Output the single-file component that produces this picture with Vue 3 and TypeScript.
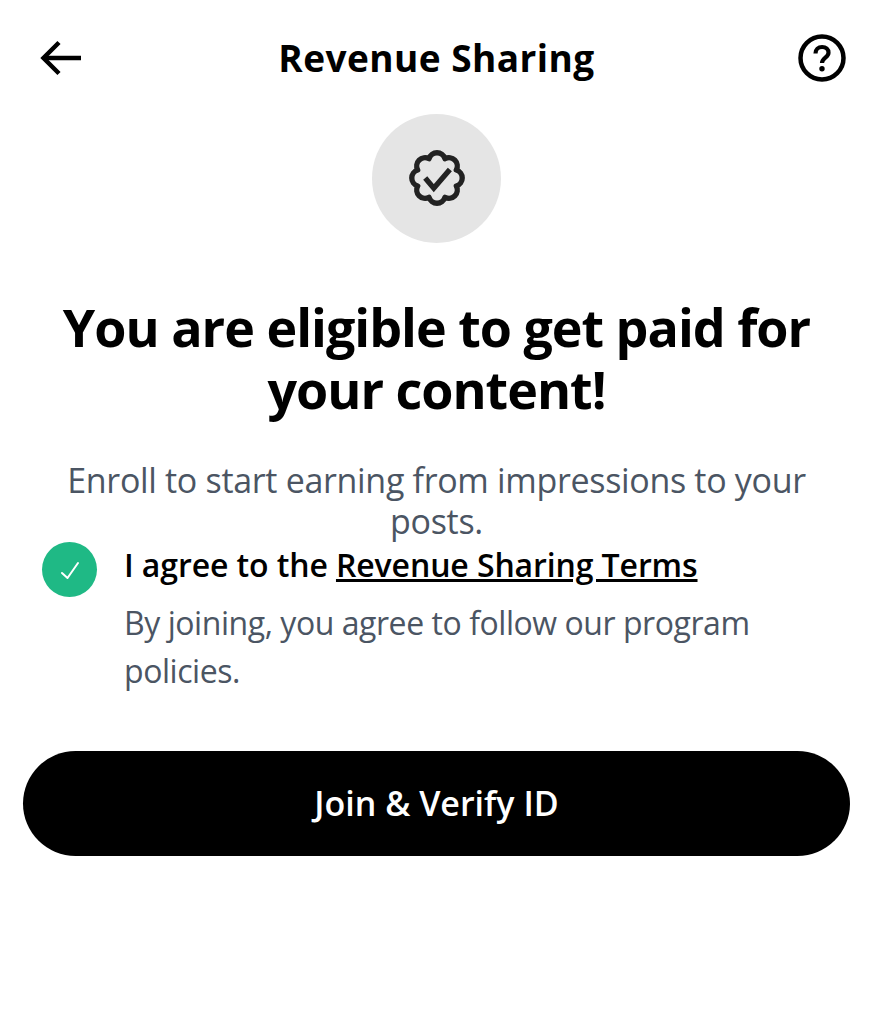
<template>
  <div class="page">
    <header class="topbar">
      <button class="icon-btn back" aria-label="Back">
        <svg width="44" height="44" viewBox="0 0 44 44" fill="none" stroke="#000" stroke-width="4.500">
          <path d="M5 22H42" />
          <path d="M20 6.500L4.500 22 20 37.500" />
        </svg>
      </button>
      <h2 class="title">Revenue Sharing</h2>
      <button class="icon-btn help" aria-label="Help">
        <svg width="48" height="48" viewBox="0 0 48 48" fill="none" stroke="#000" stroke-width="4.500">
          <circle cx="24" cy="24" r="21.500" />
          <path d="M17.500 19.500c0-4 2.800-6.500 6.600-6.500s6.400 2.400 6.400 5.700c0 4.900-6.500 5-6.500 10.300" stroke-width="4.200" />
          <circle cx="24" cy="34.800" r="2.700" fill="#000" stroke="none" />
        </svg>
      </button>
    </header>

    <div class="badge-wrap">
      <svg class="badge" width="60" height="60" viewBox="0 0 56 56" fill="none" stroke="#222" stroke-width="5" stroke-linecap="round" stroke-linejoin="round">
        <path :d="scallop" />
        <path d="M17 28l8 9.500L40 20" stroke-width="5" stroke-linecap="butt" stroke-linejoin="miter" />
      </svg>
    </div>

    <h1 class="headline">You are eligible to get paid for your content!</h1>
    <p class="lead">Enroll to start earning from impressions to your posts.</p>

    <div class="terms">
      <span class="tick">
        <svg width="20" height="20" viewBox="0 0 20 20" fill="none" stroke="#fff" stroke-width="2" stroke-linecap="round" stroke-linejoin="round">
          <path d="M2 13l5.500 5L18 3" />
        </svg>
      </span>
      <div class="terms-body">
        <div class="terms-title">I agree to the <a class="terms-link">Revenue Sharing Terms</a></div>
        <p class="terms-note">By joining, you agree to follow our program policies.</p>
      </div>
    </div>

    <button class="join">Join &amp; Verify ID</button>
  </div>
</template>

<script setup lang="ts">
import { computed } from 'vue'

// eight lobes, valleys between them
const scallop = computed(() => {
  const lobes = 8
  const valley = 19.5
  const arc = 7.8
  let d = ''
  for (let i = 0; i <= lobes; i++) {
    const a = ((i + 0.5) / lobes) * Math.PI * 2 - Math.PI / 2
    const x = (28 + valley * Math.cos(a)).toFixed(2)
    const y = (28 + valley * Math.sin(a)).toFixed(2)
    d += i === 0 ? `M${x} ${y}` : `A${arc} ${arc} 0 0 1 ${x} ${y}`
  }
  return d + 'Z'
})
</script>

<style scoped>
.page {
  width: 873px;
  height: 1024px;
  box-sizing: border-box;
  background: #fff;
  font-family: "Open Sans", "Noto Sans", sans-serif;
  display: flex;
  flex-direction: column;
  align-items: center;
}

.topbar {
  width: 100%;
  height: 114px;
  box-sizing: border-box;
  padding: 0 27px;
  display: grid;
  grid-template-columns: 1fr auto 1fr;
  align-items: center;
}

.icon-btn {
  margin-top: 2px;
  padding: 0;
  border: 0;
  background: none;
  display: flex;
}

.back {
  margin-left: 12px;
}

.help {
  justify-self: end;
}

.title {
  margin: 0;
  font-size: 37px;
  font-weight: 700;
  letter-spacing: 0.45px;
  color: #000;
}

.badge-wrap {
  width: 129px;
  height: 129px;
  border-radius: 50%;
  background: #e5e5e5;
  display: flex;
  align-items: center;
  justify-content: center;
}

.badge {
  margin-bottom: 1px;
}

.headline {
  width: 800px;
  margin: 53px 0 0;
  font-size: 52px;
  line-height: 62px;
  font-weight: 700;
  letter-spacing: -1px;
  text-align: center;
  color: #000;
}

.lead {
  width: 780px;
  margin: 40px 0 0;
  font-size: 34px;
  line-height: 41px;
  letter-spacing: -0.32px;
  text-align: center;
  color: #4b5563;
}

.terms {
  width: 100%;
  box-sizing: border-box;
  padding: 0 42px;
  display: flex;
  gap: 27px;
}

.tick {
  flex: none;
  width: 55px;
  height: 55px;
  border-radius: 50%;
  background: #1fb985;
  display: flex;
  align-items: center;
  justify-content: center;
}

.terms-body {
  flex: 1;
}

.terms-title {
  font-size: 32px;
  line-height: 45px;
  font-weight: 600;
  letter-spacing: -0.11px;
  color: #000;
}

.terms-link {
  text-decoration: underline;
}

.terms-note {
  width: 660px;
  margin: 12px 0 0;
  font-size: 32px;
  line-height: 48px;
  letter-spacing: -0.45px;
  color: #4b5563;
}

.join {
  width: 827px;
  height: 105px;
  margin-top: 56px;
  border: 0;
  border-radius: 53px;
  background: #000;
  color: #fff;
  font-family: inherit;
  font-size: 34px;
  font-weight: 600;
  padding-bottom: 3px;
}
</style>
